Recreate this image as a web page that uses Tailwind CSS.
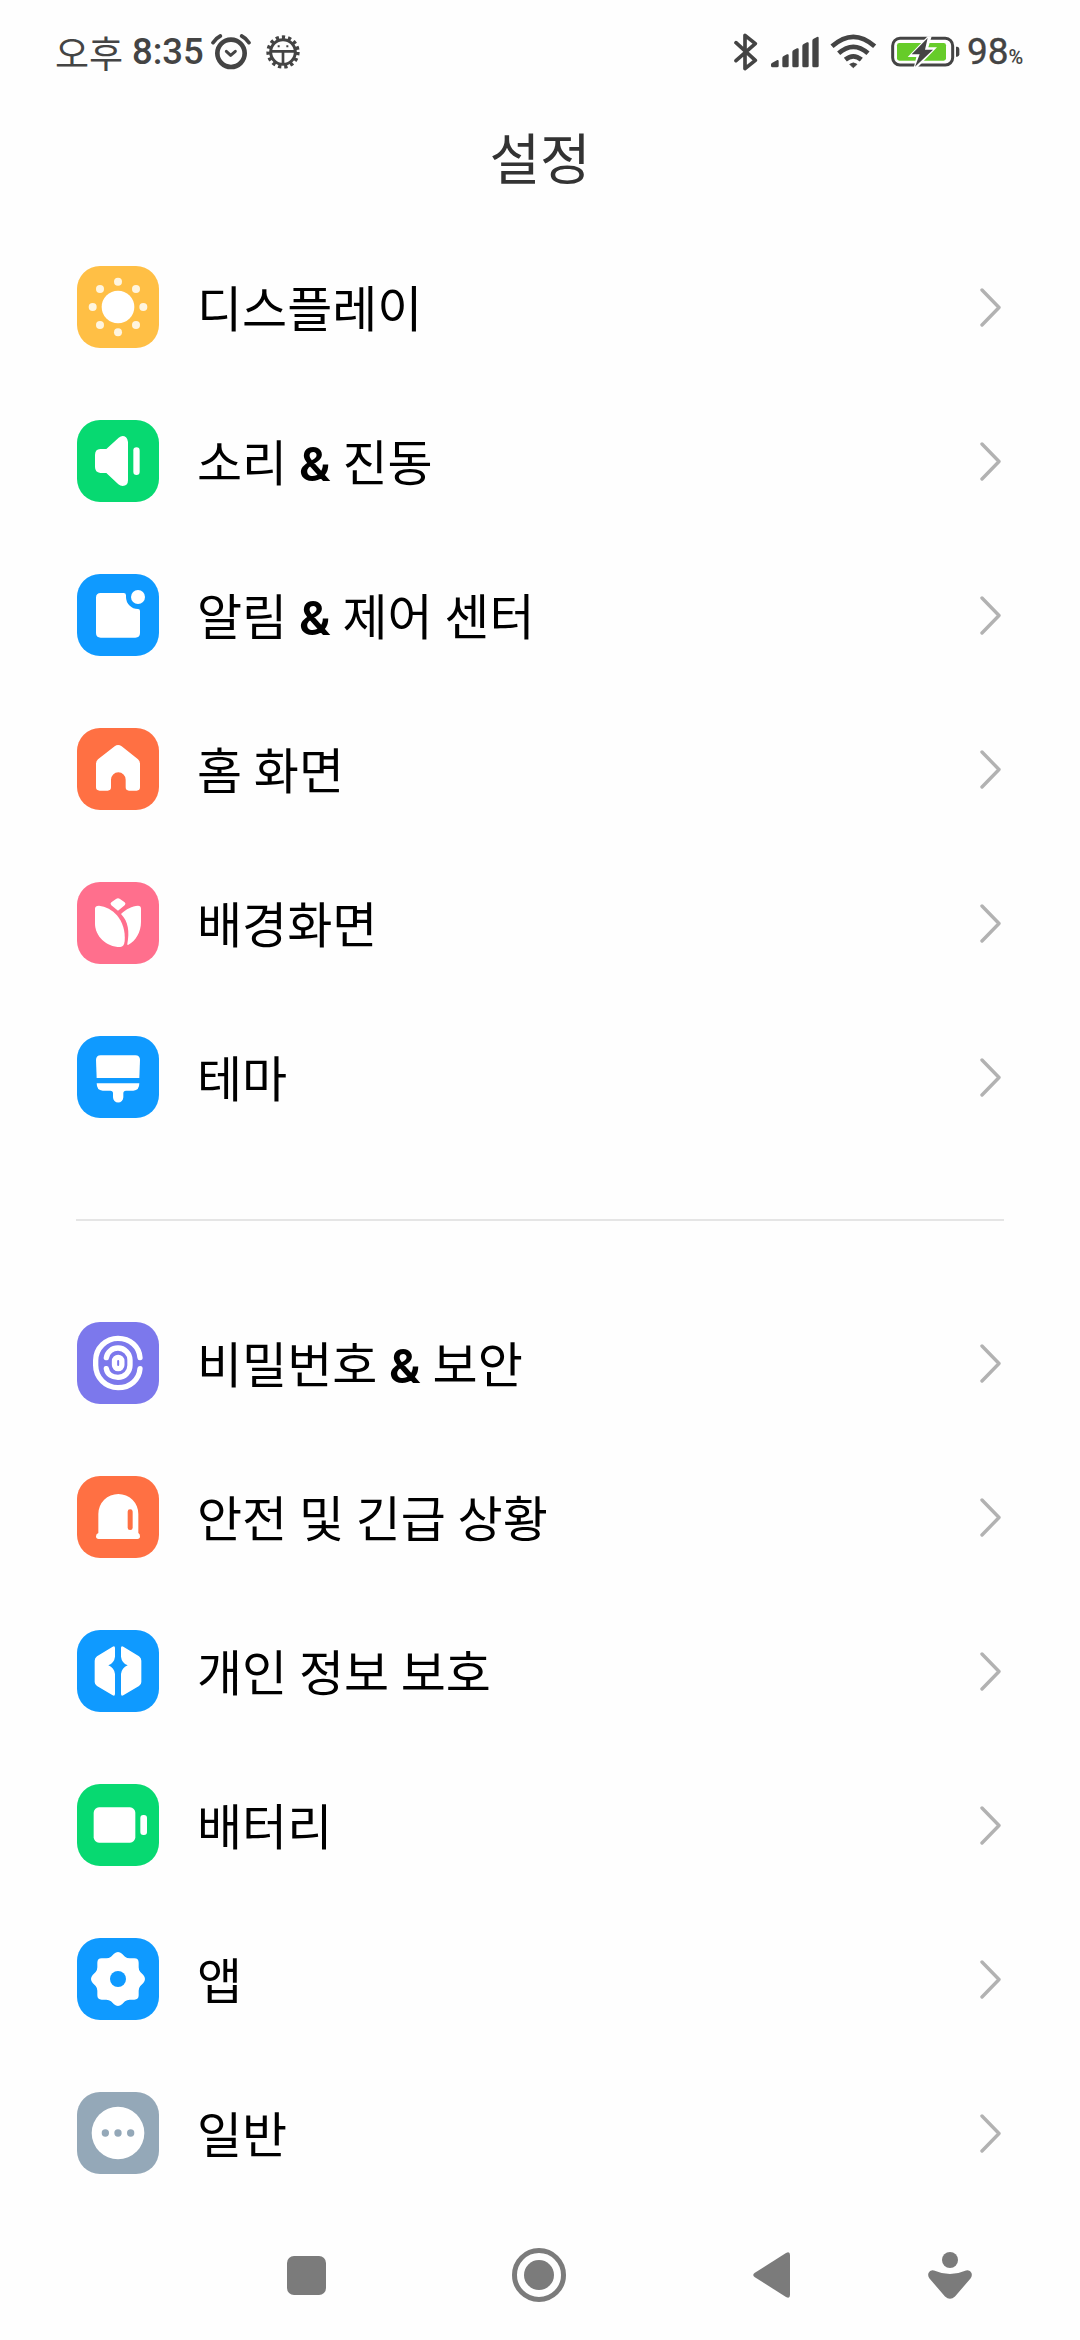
<!DOCTYPE html>
<html lang="ko">
  <head>
    <meta charset="UTF-8" />
    <meta name="viewport" content="width=device-width, initial-scale=1.0" />
    <title>설정</title>
    <script src="https://cdn.jsdelivr.net/npm/@tailwindcss/browser@4"></script>
  </head>

  <body class="bg-[#fefefe]">
    <svg class="hidden">
      <symbol id="chevron" viewBox="0 0 24 40">
        <path d="M3 3L20 20.5L3 38" fill="none" stroke="#b2b2b2" stroke-width="3.4" stroke-linecap="round" stroke-linejoin="round" />
      </symbol>
    </svg>

    <div class="flex flex-col w-[1080px] h-[2340px] overflow-hidden font-['Noto_Sans_CJK_KR',sans-serif] text-black">
      <!-- Status bar -->
      <header class="flex items-center justify-between h-[104px] pl-[55px] pr-[53px] text-[#444] shrink-0">
        <div class="flex items-center">
          <span class="text-[37px] leading-[52px] w-[77px] whitespace-nowrap">오후</span>
          <span class="font-[Roboto] font-medium text-[36.5px] leading-[52px] w-[79px] whitespace-nowrap">8:35</span>
          <!-- alarm -->
          <svg class="w-[40px] h-[36px]" viewBox="0 0 120 108" fill="none" stroke="#444" stroke-linecap="round">
            <circle cx="60" cy="58" r="41" stroke-width="14" />
            <path d="M46 52L59 64L73 52" stroke-width="9" stroke-linejoin="round" />
            <path d="M6 26Q14 13 28 6M92 6Q106 13 114 26" stroke-width="11" />
          </svg>
          <!-- debug bug -->
          <svg class="w-[34px] h-[34px] ml-[15px]" viewBox="-51 -51 102 102" fill="none" stroke="#444">
            <circle r="43" stroke-width="14" stroke-dasharray="9.5 8.5" />
            <circle r="37" stroke-width="9" />
            <path d="M-36 -2H36M0 -2V38" stroke-width="8" />
            <path d="M-13 -20V-14M13 -20V-14" stroke-width="6" />
          </svg>
        </div>
        <div class="flex items-center">
          <!-- bluetooth -->
          <svg class="w-[24px] h-[38px]" viewBox="0 0 72 114" fill="none" stroke="#444" stroke-width="11" stroke-linejoin="round" stroke-linecap="round">
            <path d="M6 29L64 82L33 107V7L64 32L6 83" />
          </svg>
          <!-- signal -->
          <svg class="w-[48px] h-[32px] ml-[13px]" viewBox="0 0 144 96" fill="#444">
            <path d="M4 80L19 72Q23 71 23 76V90Q23 94 18 94H5Q0 94 0 89V85Q0 82 4 80Z" />
            <path d="M34 66Q34 62 38 60L48 55Q53 53 53 58V90Q53 94 48 94H38Q34 94 34 90Z" />
            <path d="M64 48Q64 44 68 42L78 37Q83 35 83 40V90Q83 94 78 94H68Q64 94 64 90Z" />
            <path d="M94 30Q94 26 98 24L108 19Q113 17 113 22V90Q113 94 108 94H98Q94 94 94 90Z" />
            <path d="M124 14Q124 10 128 8L138 3Q143 1 143 6V90Q143 94 138 94H128Q124 94 124 90Z" />
          </svg>
          <!-- wifi -->
          <svg class="w-[48px] h-[36px] ml-[11px]" viewBox="0 0 144 108" fill="none" stroke="#444" stroke-width="14">
            <path d="M6 40Q70 -17 134 40M26 61Q70 22 114 61M46 80Q70 60 94 80" transform="translate(0 -3)" />
            <path d="M59 91Q70 82 81 91L72 100Q70 102 68 100Z" fill="#444" stroke-width="2" />
          </svg>
          <!-- battery, charging -->
          <svg class="w-[70px] h-[32px] ml-[13px]" viewBox="0 0 210 96">
            <rect x="5" y="7" width="180" height="80" rx="22" fill="none" stroke="#444" stroke-width="9" />
            <rect x="18" y="21" width="147" height="53" rx="7" fill="#66cc29" />
            <path d="M110 1L50 63H76L68 96H78L138 34H112L122 1Z" fill="#fefefe" />
            <path d="M110 6L62 55H86L72 92L126 41H102Z" fill="#444" />
            <path d="M195 32H199Q205 33 205 39V55Q205 61 199 62H195Z" fill="#444" />
          </svg>
          <div class="flex items-baseline font-[Roboto] w-[60px] ml-[6px] whitespace-nowrap">
            <span class="text-[37px] leading-[52px] [-webkit-text-stroke:0.4px_#444]">98</span>
            <span class="text-[20px] leading-[20px] font-medium">%</span>
          </div>
        </div>
      </header>

      <h1 class="h-[126px] shrink-0 text-center text-[55px] leading-[102px] text-[#333]">설정</h1>

      <main class="flex flex-col shrink-0 px-[77px] text-[49px] leading-[72px] [word-spacing:-2px]">
        <ul>
          <li class="flex items-center h-[154px]">
            <svg class="size-[82px] rounded-[23px] bg-[#ffbf45]" viewBox="0 0 246 246" fill="#fff">
              <circle cx="123" cy="123" r="49" />
              <g fill="#fff5df">
                <circle cx="123" cy="47" r="12" /><circle cx="123" cy="199" r="12" />
                <circle cx="47" cy="123" r="12" /><circle cx="199" cy="123" r="12" />
                <circle cx="69" cy="69" r="12" /><circle cx="177" cy="69" r="12" />
                <circle cx="69" cy="177" r="12" /><circle cx="177" cy="177" r="12" />
              </g>
            </svg>
            <span class="ml-[38px] pb-[3px] flex-1">디스플레이</span>
            <svg class="w-[24px] h-[40px]"><use href="#chevron" /></svg>
          </li>
          <li class="flex items-center h-[154px]">
            <svg class="size-[82px] rounded-[23px] bg-[#07d971]" viewBox="0 0 246 246" fill="#fff">
              <path d="M70 87H88L125 53Q137 44 147 52Q153 58 153 66V181Q153 198 137 198Q130 198 124 193L88 159H70Q54 157 54 141V105Q54 87 70 87Z" />
              <rect x="169" y="82" width="19" height="83" rx="9.5" />
            </svg>
            <span class="ml-[38px] pb-[3px] flex-1">소리 <span class="font-[Roboto] font-semibold leading-none">&amp;</span> 진동</span>
            <svg class="w-[24px] h-[40px]"><use href="#chevron" /></svg>
          </li>
          <li class="flex items-center h-[154px]">
            <svg class="size-[82px] rounded-[23px] bg-[#0f9aff]" viewBox="0 0 246 246" fill="#fff">
              <path d="M71 57H140Q147 57 147 64V69A36 36 0 0 0 183 105Q189 105 189 111V177Q189 191 175 191H71Q57 191 57 177V71Q57 57 71 57Z" />
              <circle cx="183" cy="69" r="21" />
            </svg>
            <span class="ml-[38px] pb-[3px] flex-1">알림 <span class="font-[Roboto] font-semibold leading-none">&amp;</span> 제어 센터</span>
            <svg class="w-[24px] h-[40px]"><use href="#chevron" /></svg>
          </li>
          <li class="flex items-center h-[154px]">
            <svg class="size-[82px] rounded-[23px] bg-[#ff7043]" viewBox="0 0 246 246" fill="#fff">
              <path d="M113 55Q123 47 134 55L183 94Q189 99 189 107V178Q189 188 179 188H156Q146 188 146 178V155A22 22 0 0 0 102 155V178Q102 188 92 188H68Q57 188 57 178V107Q57 99 63 94Z" />
            </svg>
            <span class="ml-[38px] pb-[3px] flex-1">홈 화면</span>
            <svg class="w-[24px] h-[40px]"><use href="#chevron" /></svg>
          </li>
          <li class="flex items-center h-[154px]">
            <svg class="size-[82px] rounded-[23px] bg-[#ff6f8d]" viewBox="0 0 246 246" fill="#fff">
              <path d="M117 51Q123 47 129 51L143 61Q148 66 143 70L123 86L103 70Q98 66 103 61Z" />
              <path d="M54 80Q54 71 66 71C105 75 148 112 143 178Q141 195 130 195C85 195 54 160 54 125Z" />
              <path d="M132 96C148 80 165 73 183 71Q192 71 192 80V120C192 150 176 178 153 189Q150 189 151 185C158 150 154 118 132 96Z" />
            </svg>
            <span class="ml-[38px] pb-[3px] flex-1">배경화면</span>
            <svg class="w-[24px] h-[40px]"><use href="#chevron" /></svg>
          </li>
          <li class="flex items-center h-[154px]">
            <svg class="size-[82px] rounded-[23px] bg-[#0f9aff]" viewBox="0 0 246 246" fill="#fff">
              <path d="M71 58H175Q189 58 189 72L187 126H59L57 72Q57 58 71 58Z" />
              <path d="M59 142H187Q187 164 169 164H147Q139 164 139 172V184A15.5 15.5 0 0 1 108 184V172Q108 164 100 164H77Q59 164 59 142Z" />
            </svg>
            <span class="ml-[38px] pb-[3px] flex-1">테마</span>
            <svg class="w-[24px] h-[40px]"><use href="#chevron" /></svg>
          </li>
        </ul>

        <hr class="border-0 h-[2px] my-[65px] -mx-px bg-[#e5e5e5]" />

        <ul>
          <li class="flex items-center h-[154px]">
            <svg class="size-[82px] rounded-[23px] bg-[#7c78ec]" viewBox="0 0 246 246" fill="none" stroke="#fff" stroke-width="16" stroke-linecap="round">
              <path d="M189 107C187 75 160 49 123 49A67 67 0 0 0 56 115V130A67 67 0 0 0 123 197C160 197 187 172 189 140" />
              <path d="M88 107C91 90 105 78 123 78A36 36 0 0 1 159 114V130A36 36 0 0 1 123 166C105 166 91 157 88 140" />
              <rect x="112.5" y="106" width="22" height="34" rx="11" />
            </svg>
            <span class="ml-[38px] pb-[3px] flex-1">비밀번호 <span class="font-[Roboto] font-semibold leading-none">&amp;</span> 보안</span>
            <svg class="w-[24px] h-[40px]"><use href="#chevron" /></svg>
          </li>
          <li class="flex items-center h-[154px]">
            <svg class="size-[82px] rounded-[23px] bg-[#ff7043]" viewBox="0 0 246 246" fill="#fff">
              <path d="M64 114A60 60 0 0 1 184 114V171Q189 174 189 181Q189 189 181 189H65Q57 189 57 181Q57 174 64 171Z" />
              <rect x="152" y="100" width="15" height="62" rx="7" fill="#ff7043" />
            </svg>
            <span class="ml-[38px] pb-[3px] flex-1">안전 및 긴급 상황</span>
            <svg class="w-[24px] h-[40px]"><use href="#chevron" /></svg>
          </li>
          <li class="flex items-center h-[154px]">
            <svg class="size-[82px] rounded-[23px] bg-[#0f9aff]" viewBox="0 0 246 246" fill="#fff">
              <path id="shieldHalf" d="M107 50Q114 46 114 54V80Q112 98 94 106Q112 114 114 132V191Q114 200 107 196L60 168Q53 164 53 156V92Q53 84 60 79Z" />
              <use href="#shieldHalf" transform="translate(246 0) scale(-1 1)" />
            </svg>
            <span class="ml-[38px] pb-[3px] flex-1">개인 정보 보호</span>
            <svg class="w-[24px] h-[40px]"><use href="#chevron" /></svg>
          </li>
          <li class="flex items-center h-[154px]">
            <svg class="size-[82px] rounded-[23px] bg-[#07d971]" viewBox="0 0 246 246" fill="#fff">
              <rect x="50" y="70" width="125" height="106" rx="16" />
              <rect x="190" y="93" width="20" height="60" rx="9" />
            </svg>
            <span class="ml-[38px] pb-[3px] flex-1">배터리</span>
            <svg class="w-[24px] h-[40px]"><use href="#chevron" /></svg>
          </li>
          <li class="flex items-center h-[154px]">
            <svg class="size-[82px] rounded-[23px] bg-[#0f9aff]" viewBox="0 0 246 246" fill="#fff">
              <path d="M111 47Q123 37 135 47L144 56Q150 61 158 61H172Q185 61 185 74V88Q185 96 190 102L199 111Q209 123 199 135L190 144Q185 150 185 158V172Q185 185 172 185H158Q150 185 144 190L135 199Q123 209 111 199L102 190Q96 185 88 185H74Q61 185 61 172V158Q61 150 56 144L47 135Q37 123 47 111L56 102Q61 96 61 88V74Q61 61 74 61H88Q96 61 102 56Z" />
              <circle cx="123" cy="123" r="24" fill="#0f9aff" />
            </svg>
            <span class="ml-[38px] pb-[3px] flex-1">앱</span>
            <svg class="w-[24px] h-[40px]"><use href="#chevron" /></svg>
          </li>
          <li class="flex items-center h-[154px]">
            <svg class="size-[82px] rounded-[23px] bg-[#94a8b8]" viewBox="0 0 246 246" fill="#fff">
              <circle cx="123" cy="123" r="79" />
              <g fill="#94a8b8">
                <circle cx="85" cy="123" r="11" />
                <circle cx="123" cy="123" r="11" />
                <circle cx="161" cy="123" r="11" />
              </g>
            </svg>
            <span class="ml-[38px] pb-[3px] flex-1">일반</span>
            <svg class="w-[24px] h-[40px]"><use href="#chevron" /></svg>
          </li>
        </ul>
      </main>

      <!-- Navigation bar -->
      <nav class="flex items-center flex-1 pl-[287px]">
        <div class="size-[39px] rounded-[7px] bg-[#7b7b7b]"></div>
        <svg class="size-[54px] ml-[186px]" viewBox="0 0 54 54">
          <circle cx="27" cy="27" r="24.5" fill="none" stroke="#7b7b7b" stroke-width="5" />
          <circle cx="27" cy="27" r="15" fill="#7b7b7b" />
        </svg>
        <svg class="w-[37px] h-[46px] ml-[187px]" viewBox="0 0 37 46" fill="#7b7b7b">
          <path d="M1.5 21L33 1Q37 -1 37 3V43Q37 47 33 45L1.5 25Q-1 23 1.5 21Z" />
        </svg>
        <svg class="w-[44px] h-[48px] ml-[138px]" viewBox="0 0 44 48" fill="#7b7b7b">
          <circle cx="22" cy="9" r="8" />
          <path d="M6 19.5Q14 23 22 23Q30 23 38 19.5Q42 18.500 43.500 22Q44.500 25 42.500 27.500L27 45.500Q22 50 17 45.500L1.500 27.500Q-0.500 25 0.500 22Q2 18.500 6 19.500Z" />
        </svg>
      </nav>
    </div>
  </body>
</html>
